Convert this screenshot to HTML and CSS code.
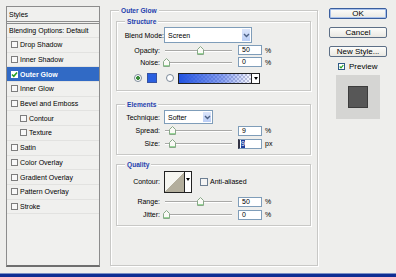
FILE: index.html
```html
<!DOCTYPE html>
<html>
<head>
<meta charset="UTF-8" />
<title>Layer Style - Outer Glow</title>
<link rel="stylesheet" href="styles.css">
</head>
<body>
    <div class="dialog">
        <!-- style list -->
        <div class="styles-panel">
            <div class="styles-head">Styles</div>
            <div class="style-row">Blending Options: Default</div>
            <div class="style-row"><span class="box"></span>Drop Shadow</div>
            <div class="style-row"><span class="box"></span>Inner Shadow</div>
            <div class="style-row selected"><span class="box"><svg width="7" height="7" viewBox="0 0 7 7"><polyline points="1,3.5 2.8,5.3 6,1.5" fill="none" stroke="#23a023" stroke-width="1.6"/></svg></span>Outer Glow</div>
            <div class="style-row"><span class="box"></span>Inner Glow</div>
            <div class="style-row"><span class="box"></span>Bevel and Emboss</div>
            <div class="style-row sub"><span class="box"></span>Contour</div>
            <div class="style-row sub"><span class="box"></span>Texture</div>
            <div class="style-row"><span class="box"></span>Satin</div>
            <div class="style-row"><span class="box"></span>Color Overlay</div>
            <div class="style-row"><span class="box"></span>Gradient Overlay</div>
            <div class="style-row"><span class="box"></span>Pattern Overlay</div>
            <div class="style-row"><span class="box"></span>Stroke</div>
        </div>

        <!-- settings -->
        <div class="main">
            <div class="group outer">
                <div class="legend">Outer Glow</div>

                <div class="group structure">
                    <div class="legend">Structure</div>
                    <div class="row select-row">
                        <label class="lbl">Blend Mode:</label>
                        <div class="select blend">Screen<span class="arrow"><svg width="7" height="5" viewBox="0 0 7 5"><polyline points="1,1 3.5,3.5 6,1" fill="none" stroke="#4d6185" stroke-width="1.4"/></svg></span></div>
                    </div>
                    <div class="row">
                        <label class="lbl">Opacity:</label>
                        <div class="slider"><span class="thumb" style="--v:50"></span></div>
                        <div class="num">50</div><span class="unit">%</span>
                    </div>
                    <div class="row">
                        <label class="lbl">Noise:</label>
                        <div class="slider"><span class="thumb" style="--v:0"></span></div>
                        <div class="num">0</div><span class="unit">%</span>
                    </div>
                    <div class="row color-row">
                        <span class="radio on"></span>
                        <span class="swatch"></span>
                        <span class="radio"></span>
                        <div class="gradient"><span class="drop"></span></div>
                    </div>
                </div>

                <div class="group elements">
                    <div class="legend">Elements</div>
                    <div class="row tech-row">
                        <label class="lbl">Technique:</label>
                        <div class="select tech">Softer<span class="arrow"><svg width="7" height="5" viewBox="0 0 7 5"><polyline points="1,1 3.5,3.5 6,1" fill="none" stroke="#4d6185" stroke-width="1.4"/></svg></span></div>
                    </div>
                    <div class="row tall">
                        <label class="lbl">Spread:</label>
                        <div class="slider"><span class="thumb" style="--v:9"></span></div>
                        <div class="num">9</div><span class="unit">%</span>
                    </div>
                    <div class="row tall">
                        <label class="lbl">Size:</label>
                        <div class="slider"><span class="thumb" style="--v:9"></span></div>
                        <div class="num focus"><span class="sel">9</span></div><span class="unit">px</span>
                    </div>
                </div>

                <div class="group quality">
                    <div class="legend">Quality</div>
                    <div class="row contour-row">
                        <label class="lbl">Contour:</label>
                        <div class="contour"><span class="curve"></span><span class="drop"></span></div>
                        <span class="check"></span><span class="check-text">Anti-aliased</span>
                    </div>
                    <div class="row tall">
                        <label class="lbl">Range:</label>
                        <div class="slider"><span class="thumb" style="--v:50"></span></div>
                        <div class="num">50</div><span class="unit">%</span>
                    </div>
                    <div class="row tall">
                        <label class="lbl">Jitter:</label>
                        <div class="slider"><span class="thumb" style="--v:0"></span></div>
                        <div class="num">0</div><span class="unit">%</span>
                    </div>
                </div>
            </div>
        </div>

        <!-- buttons and preview -->
        <div class="side">
            <div class="btn default">OK</div>
            <div class="btn">Cancel</div>
            <div class="btn">New Style...</div>
            <div class="preview-row">
                <span class="check on"><svg width="7" height="7" viewBox="0 0 7 7"><polyline points="1,3.5 2.8,5.3 6,1.5" fill="none" stroke="#23a023" stroke-width="1.6"/></svg></span>Preview
            </div>
            <div class="preview"><span class="preview-square"></span></div>
        </div>
    </div>
    <div class="taskbar"></div>
</body>
</html>
```

FILE: styles.css
```css
body
{
    margin: 0;
    width: 396px;
    height: 277px;
    overflow: hidden;
    background: #eeeeec;
    font-family: "Liberation Sans", Arial, sans-serif;
    font-size: 7px;
    color: #000;
}
.dialog
{
    display: flex;
    align-items: flex-start;
    height: 272px;
}

/* ---- style list ---- */
.styles-panel
{
    box-sizing: border-box;
    margin: 6px 0 0 6px;
    width: 94px;
    height: 261px;
    border: 1px solid #8c8c8c;
    border-bottom: 2px solid #6e6e6e;
    background: #f0f0ee;
}
.styles-head
{
    height: 14px;
    line-height: 15px;
    padding-left: 2px;
    border-bottom: 3px double #8c8c8c;
}
.style-row
{
    display: flex;
    align-items: center;
    height: 13.7px;
    padding-left: 2px;
    border-bottom: 1px solid #e2e2e0;
    white-space: nowrap;
}
.style-row:nth-child(2)
{
    height: 13px;
}
.style-row .box
{
    box-sizing: border-box;
    width: 7px;
    height: 7px;
    margin: 0 2px 0 2px;
    border: 1px solid #7d7d7d;
    background: #f8f8f8;
    display: flex;
    align-items: center;
    justify-content: center;
}
.style-row .box svg
{
    flex: none;
}
.style-row.sub .box
{
    margin-left: 11px;
}
.style-row.selected
{
    background: #316ac5;
    color: #fff;
    font-weight: bold;
}
.style-row.selected .box
{
    background: #fff;
    border-color: #fff;
}

/* ---- groups ---- */
.main
{
    margin: 10px 0 0 10px;
}
.group
{
    box-sizing: border-box;
    border: 1px solid #c8c8c6;
    box-shadow: inset 1px 1px 0 #fff, 1px 1px 0 #fff;
}
.legend
{
    width: fit-content;
    height: 10px;
    line-height: 10px;
    margin: -5px 0 0 8px;
    padding: 0 2px;
    background: #eeeeec;
    color: #1f3fae;
    font-weight: bold;
    font-size: 6.6px;
}
.outer
{
    width: 208px;
    height: 256px;
    padding: 0 6px 0 5px;
}
.outer > .legend
{
    margin-left: 3px;
}
.outer .group
{
    width: 195px;
}
.structure
{
    margin-top: 5px;
    padding-bottom: 6px;
}
.elements
{
    margin-top: 13px;
    padding-bottom: 4px;
}
.quality
{
    margin-top: 9px;
    padding-bottom: 4px;
}

/* ---- rows ---- */
.row
{
    display: flex;
    align-items: center;
    height: 12px;
}
.row.tall
{
    height: 13px;
}
.select-row
{
    height: 16px;
    margin-bottom: 1px;
}
.tech-row
{
    height: 14px;
}
.lbl
{
    width: 43px;
    margin-right: 4px;
    text-align: right;
    white-space: nowrap;
}
.select-row .lbl
{
    margin-right: 0;
    width: 47px;
}
.select
{
    box-sizing: border-box;
    display: flex;
    align-items: center;
    justify-content: space-between;
    height: 100%;
    padding-left: 3px;
    border: 1px solid #7f9db9;
    background: #fff;
}
.select.blend
{
    width: 88px;
}
.select.tech
{
    width: 49px;
}
.arrow
{
    box-sizing: border-box;
    display: flex;
    align-items: center;
    justify-content: center;
    width: 10px;
    height: 100%;
    border: 1px solid #fff;
    background: linear-gradient(#dce6fb, #b9cdf5);
}

/* ---- slider ---- */
.slider
{
    position: relative;
    width: 69px;
    height: 9px;
}
.slider::before
{
    content: "";
    position: absolute;
    left: 1px;
    right: 1px;
    top: 4px;
    height: 1px;
    background: #a9a9a7;
    box-shadow: 0 1px 0 #fff;
}
.thumb
{
    position: absolute;
    top: 0;
    left: calc(var(--v) * 0.67px - 1px);
    width: 7px;
    height: 9px;
    background: url("data:image/svg+xml,%3Csvg xmlns='http://www.w3.org/2000/svg' width='7' height='9'%3E%3Cpath d='M0.5 8.5 V3.5 L3.5 0.5 L6.5 3.5 V8.5 Z' fill='%23fafaf6' stroke='%2388a888'/%3E%3Cpath d='M1 7.5 H6' stroke='%2398d898'/%3E%3C/svg%3E") no-repeat;
}
.num
{
    box-sizing: border-box;
    width: 24px;
    height: 10px;
    line-height: 8px;
    margin-left: 5px;
    padding-left: 3px;
    border: 1px solid #7f9db9;
    background: #fff;
}
.num.focus
{
    padding-left: 1px;
    border-left: 2px solid #334;
}
.sel
{
    display: inline-block;
    width: 4px;
    background: #1e3e9c;
    color: #fff;
}
.unit
{
    margin-left: 3px;
}

/* ---- glow colour ---- */
.color-row
{
    margin-top: 4px;
}
.radio
{
    box-sizing: border-box;
    width: 8px;
    height: 8px;
    border: 1px solid #7c8a9a;
    border-radius: 50%;
    background: #fff;
}
.radio.on
{
    margin-left: 17px;
    background: radial-gradient(circle, #3b8c3b 1.6px, #fff 2.2px);
}
.swatch
{
    box-sizing: border-box;
    width: 10px;
    height: 10px;
    margin: 0 9px 0 5px;
    border: 1px solid #3652a0;
    background: #2a5fe0;
}
.gradient
{
    box-sizing: border-box;
    display: flex;
    justify-content: flex-end;
    width: 82px;
    height: 11px;
    margin-left: 4px;
    border: 1px solid #222;
    background:
        linear-gradient(to right, #2253e0, rgba(60, 100, 230, 0.6) 55%, rgba(255, 255, 255, 0) 92%),
        repeating-conic-gradient(#c8c8d8 0 25%, #fff 0 50%) 0 0 / 4px 4px;
}
.drop
{
    box-sizing: border-box;
    width: 8px;
    height: 100%;
    border-left: 1px solid #222;
    background: #fff url("data:image/svg+xml,%3Csvg xmlns='http://www.w3.org/2000/svg' width='4' height='3'%3E%3Cpath d='M0 0 H4 L2 3 Z' fill='%23000'/%3E%3C/svg%3E") no-repeat center;
}

/* ---- contour ---- */
.contour-row
{
    height: 23px;
    margin-bottom: 2px;
}
.contour
{
    box-sizing: border-box;
    display: flex;
    width: 28px;
    height: 22px;
    border: 1px solid #222;
}
.curve
{
    flex: 1;
    background: linear-gradient(to bottom right, #f5f5f0 50%, #b3ae9c 50%);
}
.contour .drop
{
    width: 7px;
    background-position: center 6px;
}
.check
{
    box-sizing: border-box;
    display: inline-flex;
    align-items: center;
    justify-content: center;
    width: 8px;
    height: 8px;
    border: 1px solid #6d7f93;
    background: #f4f4f4;
}
.contour-row .check
{
    margin: 0 2px 0 8px;
}
.check-text
{
    white-space: nowrap;
}

/* ---- buttons and preview ---- */
.side
{
    margin: 0 0 0 11px;
    width: 58px;
    font-size: 8px;
}
.btn
{
    box-sizing: border-box;
    height: 11px;
    margin-top: 8px;
    line-height: 9px;
    text-align: center;
    border: 1px solid #5d6f86;
    border-radius: 2px;
    background: linear-gradient(#fdfdfb, #e9e8e2);
}
.btn.default
{
    border-color: #3a5e9e;
    box-shadow: inset 0 0 0 1px #a9c2ec;
}
.preview-row
{
    display: flex;
    align-items: center;
    height: 9px;
    margin-top: 5px;
    padding-left: 9px;
}
.preview-row .check
{
    width: 7px;
    height: 7px;
    margin-right: 4px;
    border-color: #2d5a86;
    background: #fff;
}
.preview
{
    display: flex;
    justify-content: center;
    align-items: center;
    width: 44px;
    height: 44px;
    margin: 4px 0 0 7px;
    background: #d5d5d3;
}
.preview-square
{
    box-sizing: border-box;
    width: 20px;
    height: 22px;
    border: 1px solid #3c3c3c;
    background: #575757;
}

.taskbar
{
    height: 3px;
    margin-top: 2px;
    border-top: 0;
    background: #0e2d93;
    box-shadow: 0 -1px 0 #7c8fc4;
}
```
